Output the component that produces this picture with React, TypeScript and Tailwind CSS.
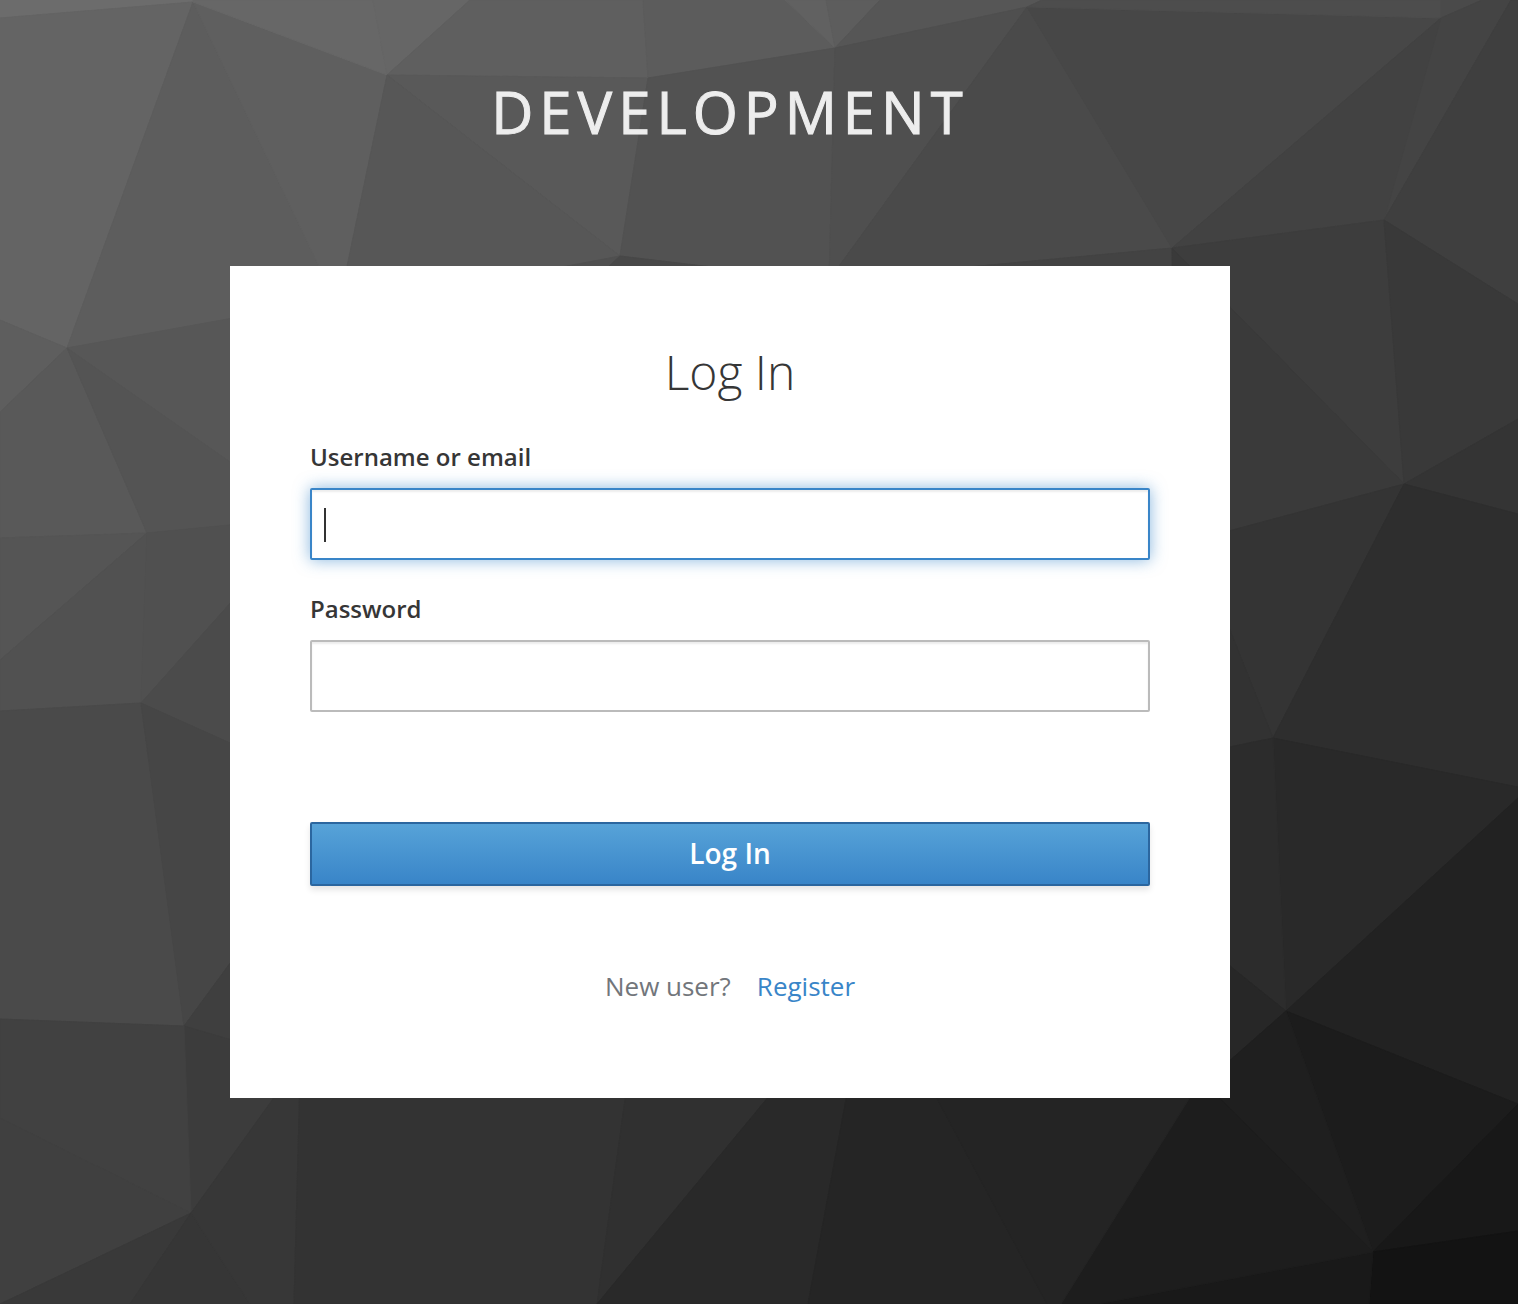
import React, { useState } from "react";

type Facet = [fill: string, points: string];

const facets: Facet[] = [
  // top left
  ["#6c6c6c", "0,0 193,0 193,2 0,18"],
  ["#646464", "0,18 193,2 67,348 0,320"],
  ["#5d5d5d", "193,2 335,300 67,348"],
  ["#5f5f5f", "193,2 387,75 340,300 335,300"],
  ["#676767", "193,0 373,0 387,75 193,2"],
  ["#666666", "373,0 470,0 387,75"],
  ["#5f5f5f", "470,0 643,0 648,78 387,75"],
  ["#5c5c5c", "643,0 785,0 835,48 648,78"],
  ["#616161", "785,0 826,0 835,48"],
  ["#5d5d5d", "826,0 880,0 835,48"],
  ["#565656", "880,0 1042,0 1027,7 835,48"],
  ["#595959", "387,75 648,78 620,256"],
  ["#575757", "387,75 620,256 440,300 340,300"],
  ["#505050", "620,256 440,290 440,300 573,300"],
  ["#525252", "648,78 835,48 829,281 620,256"],
  ["#484848", "620,256 829,281 829,300 573,300"],
  ["#4f4f4f", "835,48 1027,7 829,280"],
  // top right
  ["#4a4a4a", "1027,7 1172,248 829,280"],
  ["#434343", "1172,248 1174,300 829,300 829,280"],
  ["#474747", "1027,7 1441,18 1172,248"],
  ["#4d4d4d", "1042,0 1441,0 1441,18 1027,7"],
  ["#4a4a4a", "1441,0 1482,0 1441,18"],
  ["#444444", "1441,18 1482,0 1511,0 1384,220"],
  ["#424242", "1172,248 1441,18 1384,220"],
  ["#3f3f3f", "1511,0 1518,0 1518,304 1384,220"],
  ["#3d3d3d", "1172,248 1384,220 1404,484"],
  ["#3a3a3a", "1172,248 1404,484 1174,546"],
  ["#393939", "1384,220 1518,304 1518,419 1404,484"],
  ["#343434", "1404,484 1518,419 1518,514"],
  ["#343434", "1404,484 1210,536 1210,580 1273,738"],
  ["#323232", "1210,580 1273,738 1210,751"],
  ["#2e2e2e", "1404,484 1518,514 1518,787 1273,738"],
  // bottom right
  ["#292929", "1273,738 1518,787 1518,798 1286,1011"],
  ["#2c2c2c", "1210,751 1273,738 1286,1011 1210,950"],
  ["#272727", "1210,950 1286,1011 1210,1078"],
  ["#222222", "1518,798 1518,1104 1286,1011"],
  ["#1c1c1c", "1286,1011 1518,1104 1373,1252"],
  ["#1f1f1f", "1286,1011 1373,1252 1175,1078 1210,1078"],
  ["#181818", "1518,1104 1518,1231 1373,1252"],
  ["#131313", "1373,1252 1518,1231 1518,1304 1369,1304"],
  ["#191919", "1373,1252 1369,1304 1098,1304"],
  ["#1d1d1d", "1200,1078 1373,1252 1098,1304 1060,1304"],
  // left
  ["#5e5e5e", "0,320 67,348 0,412"],
  ["#595959", "0,412 67,348 147,533 0,538"],
  ["#575757", "67,348 250,315 250,476"],
  ["#545454", "67,348 250,476 250,523 147,533"],
  ["#555555", "0,538 147,533 0,660"],
  ["#515151", "0,660 147,533 141,703 0,711"],
  ["#505050", "147,533 250,523 250,581 141,703"],
  ["#4b4b4b", "141,703 250,581 250,752"],
  ["#4a4a4a", "0,711 141,703 184,1026 0,1019"],
  ["#464646", "141,703 250,752 250,936 184,1026"],
  ["#3f3f3f", "184,1026 250,936 250,1047"],
  // bottom left
  ["#3c3c3c", "184,1026 290,1057 290,1078 191,1213"],
  ["#414141", "0,1019 184,1026 191,1213 0,1118"],
  ["#404040", "0,1118 191,1213 0,1304"],
  ["#393939", "0,1304 191,1213 130,1304"],
  ["#363636", "191,1213 250,1304 130,1304"],
  ["#373737", "191,1213 288,1078 300,1078 294,1304 250,1304"],
  ["#333333", "300,1078 628,1078 597,1304 294,1304"],
  ["#303030", "628,1078 784,1078 597,1304"],
  ["#292929", "784,1078 850,1078 808,1304 597,1304"],
  ["#252525", "850,1078 926,1078 1047,1304 808,1304"],
  ["#242424", "926,1078 1202,1078 1061,1304 1047,1304"],
];

function Backdrop() {
  return (
    <svg
      className="absolute inset-0 h-full w-full"
      viewBox="0 0 1518 1304"
      preserveAspectRatio="xMidYMid slice"
      aria-hidden="true"
    >
      {facets.map(([fill, points]) => (
        <polygon key={points} points={points} fill={fill} stroke={fill} />
      ))}
    </svg>
  );
}

const labelClass = "block text-2xl leading-[34px] font-semibold text-[#363636]";
const inputClass =
  "block h-[72px] w-full rounded-xs border-2 border-[#bbb] bg-white px-3 text-2xl text-[#333] outline-none shadow-[inset_0_2px_2px_rgba(3,3,3,0.075)] focus:border-[#3985c8] focus:shadow-[inset_0_2px_2px_rgba(3,3,3,0.075),0_0_16px_rgba(57,133,200,0.6)]";

export default function App() {
  const [username, setUsername] = useState("");
  const [password, setPassword] = useState("");

  return (
    <main className="relative min-h-screen bg-[#3c3c3c] font-['Open_Sans',sans-serif]">
      <Backdrop />
      <div className="relative flex flex-col items-center pt-[76px] pb-16 pl-4 pr-[74px]">
        <header className="text-center text-[58px] leading-[72px] tracking-[6px] text-[#ededed] uppercase [-webkit-text-stroke:1px_#ededed]">
          Development
        </header>

        <section className="mt-[118px] w-full max-w-[1000px] bg-white px-20 pt-20 pb-[92px]">
          <h1 className="text-center text-5xl leading-[52px] font-light text-[#363636]">
            Log In
          </h1>

          <form className="mt-[42px]" onSubmit={(e) => e.preventDefault()}>
            <label htmlFor="username" className={labelClass}>
              Username or email
            </label>
            <div className="relative mt-3.5">
              <input
                id="username"
                type="text"
                autoFocus
                autoComplete="off"
                value={username}
                onChange={(e) => setUsername(e.target.value)}
                className={`peer placeholder-shown:caret-transparent ${inputClass}`}
                placeholder=" "
              />
              <span
                aria-hidden="true"
                className="pointer-events-none absolute top-5 left-3.5 hidden h-[34px] w-0.5 bg-[#333] peer-focus:peer-placeholder-shown:block"
              />
            </div>

            <label htmlFor="password" className={`mt-8 ${labelClass}`}>
              Password
            </label>
            <div className="mt-3.5">
              <input
                id="password"
                type="password"
                autoComplete="off"
                value={password}
                onChange={(e) => setPassword(e.target.value)}
                className={inputClass}
              />
            </div>

            <button
              type="submit"
              className="mt-[110px] block h-16 w-full rounded-xs border-2 border-[#2b669f] bg-linear-to-b from-[#57a3d8] to-[#3985c8] pb-0.5 text-[28px] leading-9 font-semibold text-white shadow-[0_4px_6px_rgba(3,3,3,0.1)]"
            >
              Log In
            </button>
          </form>

          <p className="mt-20 flex justify-center gap-[26px] text-[26px] leading-10 text-[#72767b]">
            <span>New user?</span>
            <a href="#register" className="text-[#3985c8]">
              Register
            </a>
          </p>
        </section>
      </div>
    </main>
  );
}
